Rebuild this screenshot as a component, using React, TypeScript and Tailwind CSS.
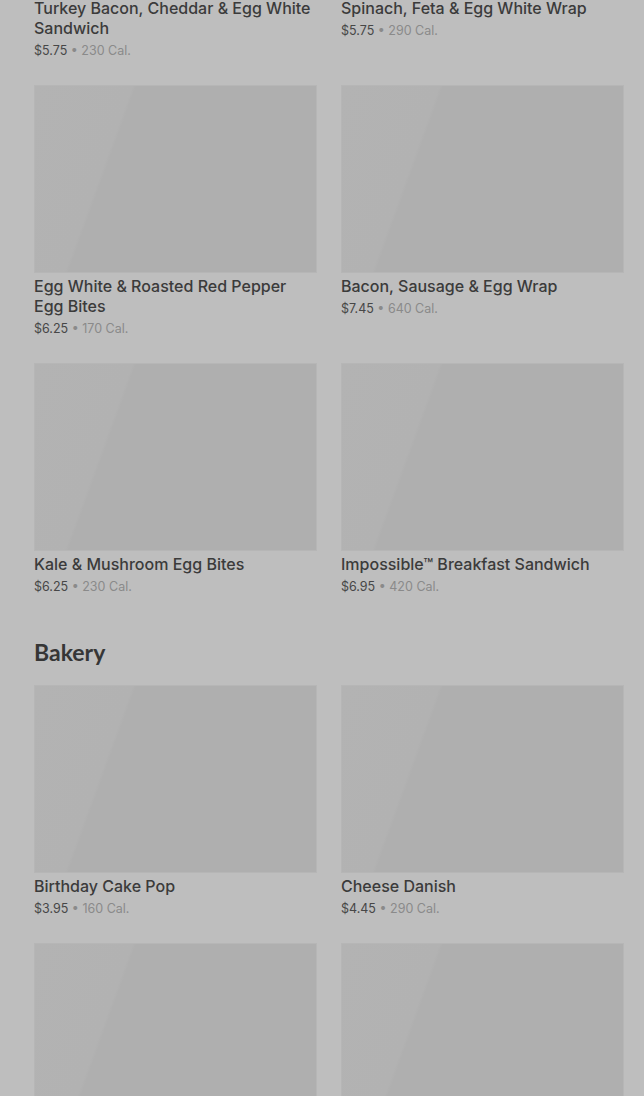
import React from "react";

type MenuItem = {
  name: string;
  price: string;
  calories: string;
};

const breakfast: MenuItem[] = [
  { name: "Turkey Bacon, Cheddar & Egg White Sandwich", price: "$5.75", calories: "230 Cal." },
  { name: "Spinach, Feta & Egg White Wrap", price: "$5.75", calories: "290 Cal." },
  { name: "Egg White & Roasted Red Pepper Egg Bites", price: "$6.25", calories: "170 Cal." },
  { name: "Bacon, Sausage & Egg Wrap", price: "$7.45", calories: "640 Cal." },
  { name: "Kale & Mushroom Egg Bites", price: "$6.25", calories: "230 Cal." },
  { name: "Impossible™ Breakfast Sandwich", price: "$6.95", calories: "420 Cal." },
];

const bakery: MenuItem[] = [
  { name: "Birthday Cake Pop", price: "$3.95", calories: "160 Cal." },
  { name: "Cheese Danish", price: "$4.45", calories: "290 Cal." },
  { name: "Butter Croissant", price: "$3.95", calories: "260 Cal." },
  { name: "Chocolate Croissant", price: "$4.45", calories: "300 Cal." },
];

const ItemCard = ({ item }: { item: MenuItem }) => {
  return (
    <article className="flex flex-col">
      <div className="h-[188px] w-full border border-[#b6b6b6] bg-[linear-gradient(110deg,#b3b3b3_0%,#b2b2b2_28%,#afafaf_29%,#afafaf_100%)]" />
      <h3 className="mt-[3px] text-[16px] font-medium leading-[20px] text-[#3b3b3b]">
        {item.name}
      </h3>
      <p className="mt-[3px] text-[12.5px] leading-[20px]">
        <span className="text-[#474747]">{item.price}</span>
        <span className="text-[#8a8a8a]"> • {item.calories}</span>
      </p>
    </article>
  );
};

export default function App() {
  return (
    <div
      className="h-[1096px] w-full overflow-hidden bg-[#bebebe]"
      style={{ fontFamily: "Inter, 'Noto Sans', sans-serif" }}
    >
      <div className="-mt-[193px] pl-[34px] pr-[20px]">
        <section>
          <div className="grid grid-cols-2 gap-x-6 gap-y-6">
            {breakfast.map((item) => (
              <ItemCard key={item.name} item={item} />
            ))}
          </div>
        </section>

        <section className="mt-[41px]">
          <h2
            className="mb-[19px] text-[23px] font-bold leading-[28px] text-[#363636]"
            style={{ fontFamily: "Lato, Inter, sans-serif" }}
          >
            Bakery
          </h2>
          <div className="grid grid-cols-2 gap-x-6 gap-y-6">
            {bakery.map((item) => (
              <ItemCard key={item.name} item={item} />
            ))}
          </div>
        </section>
      </div>
    </div>
  );
}
